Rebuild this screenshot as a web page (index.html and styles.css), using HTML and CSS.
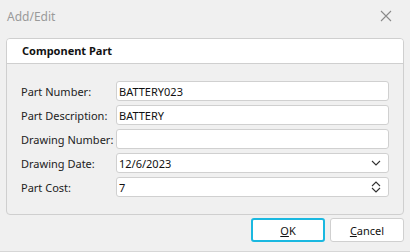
FILE: index.html
```html
<!DOCTYPE html>
<html>
<head>
<meta charset="utf-8">
<link rel="stylesheet" href="styles.css">
</head>
<body>
<div class="dialog">
  <div class="titlebar">
    <span class="title">Add/Edit</span>
    <svg class="close" width="12" height="12" viewBox="0 0 12 12"><path d="M1 1 L11 11 M11 1 L1 11" stroke="#8a8a8a" stroke-width="1.1" fill="none"/></svg>
  </div>
  <div class="group">
    <div class="group-header">Component Part</div>
    <div class="form">
      <div class="row"><span class="label">Part Number:</span><div class="input">BATTERY023</div></div>
      <div class="row"><span class="label">Part Description:</span><div class="input">BATTERY</div></div>
      <div class="row"><span class="label">Drawing Number:</span><div class="input"></div></div>
      <div class="row"><span class="label">Drawing Date:</span><div class="input">12/6/2023<svg class="chev" width="10" height="6" viewBox="0 0 10 6"><path d="M1 1 L5 5 L9 1" stroke="#333" stroke-width="1.1" fill="none"/></svg></div></div>
      <div class="row"><span class="label">Part Cost:</span><div class="input">7<svg class="spin" width="10" height="12" viewBox="0 0 10 12"><path d="M1 5 L5 1 L9 5 M1 7 L5 11 L9 7" stroke="#333" stroke-width="1.1" fill="none"/></svg></div></div>
    </div>
  </div>
  <div class="buttons">
    <div class="btn btn-ok"><span class="u">O</span>K</div>
    <div class="btn"><span class="u">C</span>ancel</div>
  </div>
</div>
</body>
</html>
```
FILE: styles.css
```css
html, body {
  margin: 0;
  padding: 0;
}
body {
  background: #f0f0f0;
  font-family: "Noto Sans", "Segoe UI", sans-serif;
  font-size: 11px;
  color: #1a1a1a;
  width: 410px;
  height: 252px;
  overflow: hidden;
}
.dialog {
  height: 251px;
  border-bottom: 1px solid #d6d6d6;
}
.titlebar {
  height: 32px;
  display: flex;
  align-items: center;
  justify-content: space-between;
  padding: 0 18px 0 7px;
}
.title {
  color: #9a9a9a;
  font-size: 12px;
}
.close {
  display: block;
}
.group {
  margin: 6px 6px 0 6px;
  border: 1px solid #cfcfcf;
  border-radius: 4px;
  overflow: hidden;
}
.group-header {
  background: #fff;
  height: 24px;
  line-height: 24px;
  border-bottom: 1px solid #cfcfcf;
  padding-left: 15px;
  font-weight: bold;
  color: #111;
}
.form {
  padding: 17px 14px 17px 14px;
  display: flex;
  flex-direction: column;
  gap: 4px;
}
.row {
  display: flex;
  align-items: center;
  height: 20px;
}
.label {
  width: 95px;
  flex-shrink: 0;
  white-space: nowrap;
  color: #222;
}
.input {
  width: 267px;
  height: 18px;
  background: #fff;
  border: 1px solid #d0d0d0;
  border-radius: 3px;
  padding: 0 4px 0 2px;
  display: flex;
  align-items: center;
  justify-content: space-between;
  color: #111;
}
.chev, .spin {
  margin-right: 3px;
}
.buttons {
  display: flex;
  justify-content: flex-end;
  gap: 5px;
  margin: 3px 6px 0 0;
}
.btn {
  width: 72px;
  height: 22px;
  border: 1px solid #d0d0d0;
  border-radius: 3px;
  background: #fff;
  display: flex;
  align-items: center;
  justify-content: center;
  color: #111;
}
.btn-ok {
  width: 70px;
  height: 20px;
  border: 2px solid #1ab8e0;
}
.u {
  text-decoration: underline;
}
```
